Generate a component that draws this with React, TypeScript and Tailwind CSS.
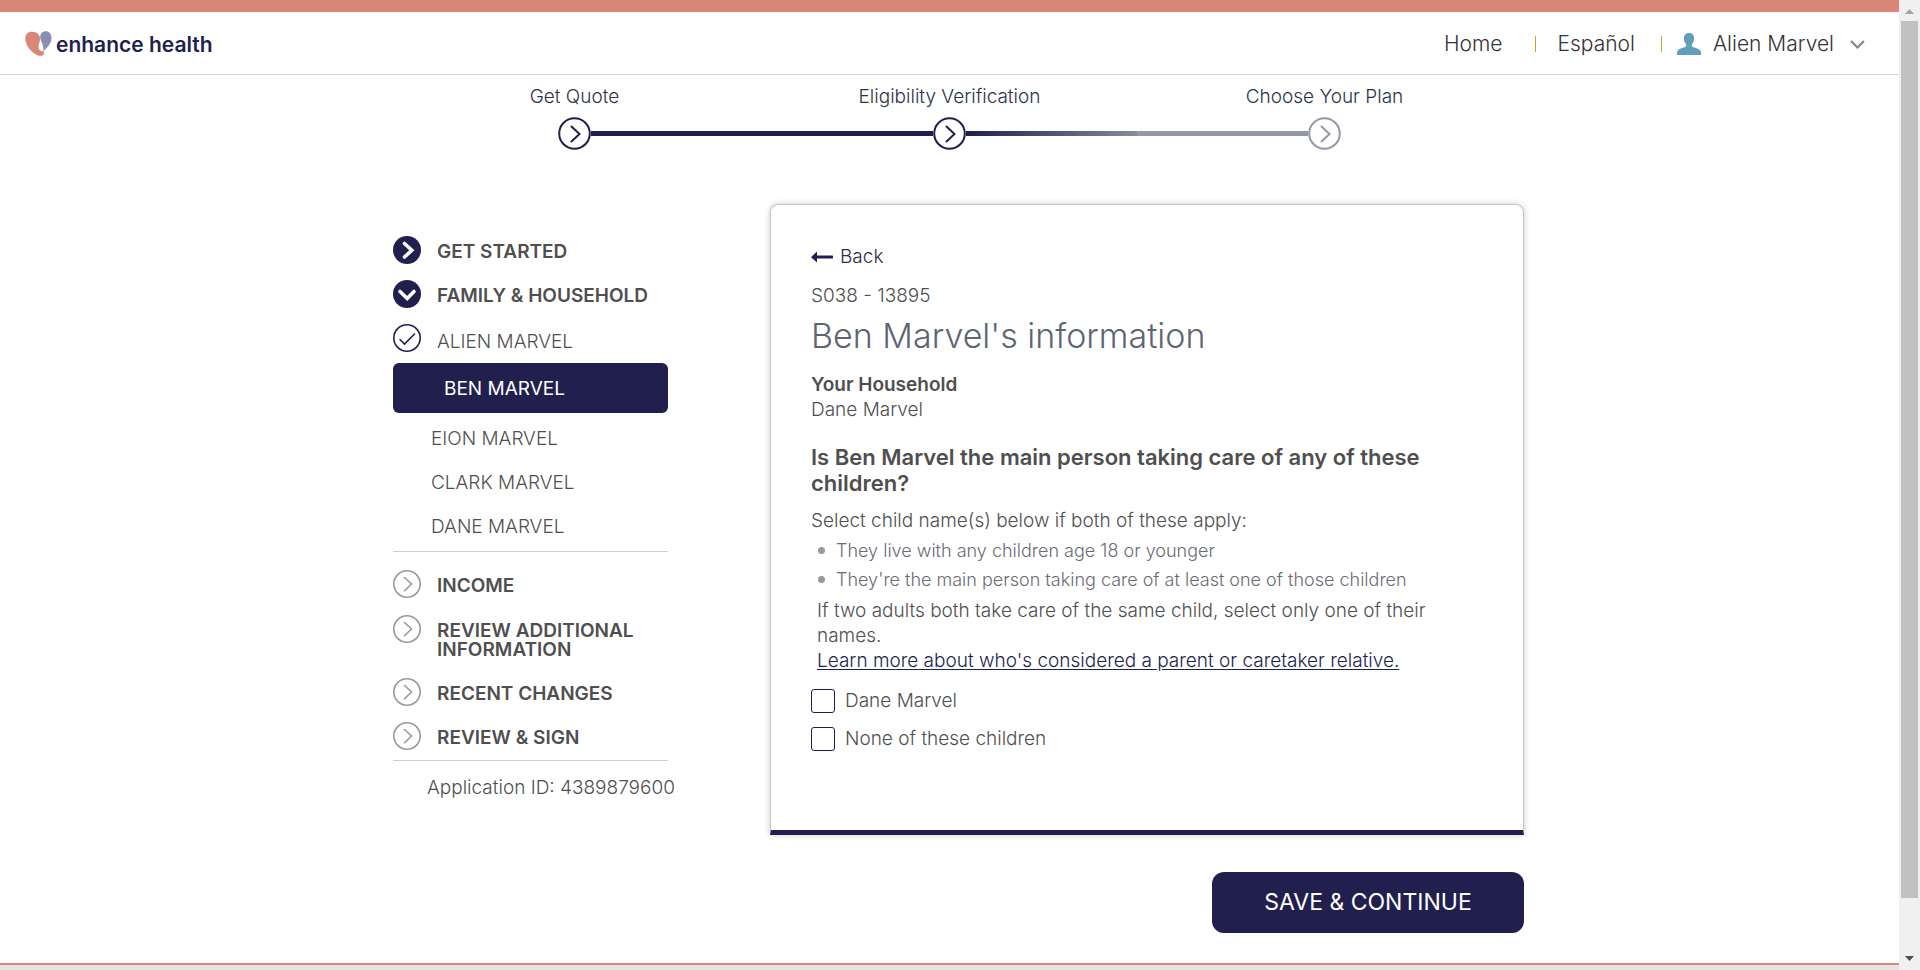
import React from "react";

const NAVY = "#211f4d";

function Logo() {
  return (
    <a href="#" aria-label="enhance health" className="flex items-start gap-1 pt-[2px]">
      <svg width="27" height="26" viewBox="0 0 27 26" aria-hidden="true">
        <path
          d="M7.500.8C3 .6.3 3.200.3 7.400c0 6.800 5.900 14 12.200 16.800 3 1.300 6.500.8 6.500-2.300 0-1.700-1.300-1.600-2.200-1.800-2.900-.5-3.600-3.300-3-6.600.5-2.500 1.700-4.300 1.200-6.800C14.200 3 11.400.9 7.500.8Z"
          fill="#da8777"
        />
        <path
          d="M20.500.3c-3.200.1-5.300 2.500-5.300 6.200 0 2.500 1.700 4.500 2.500 7.300.7 2.300.7 4 .6 6.300 3.600-3 8.200-8 8.200-12.900 0-4.300-2.400-7-6-6.900Z"
          fill="#8a8fb5"
        />
      </svg>
      <span className="pt-[2px] text-[21px] leading-6 font-semibold text-[#211f4d]">enhance health</span>
    </a>
  );
}

function PersonIcon() {
  return (
    <svg width="24" height="22" viewBox="0 0 24 22" fill="#609fb9" aria-hidden="true">
      <path d="M12 0c3.300 0 5.100 2 5.100 5.300 0 2.500-.8 4.300-1.800 5.500-.7 1-.6 2.700.5 3.200l5.200 1.700c2 .8 3 2.200 3 4.300v2H0v-2c0-2.100 1-3.500 3-4.300L8.200 14c1.100-.5 1.200-2.200.5-3.200-1-1.200-1.800-3-1.800-5.500C6.900 2 8.700 0 12 0Z" />
    </svg>
  );
}

function StepCircle({ color }: { color: string }) {
  return (
    <svg width="33" height="33" viewBox="0 0 33 33" fill="none" stroke={color} strokeWidth="2" aria-hidden="true">
      <circle cx="16.5" cy="16.5" r="15.300" fill="#fff" />
      <path d="M13.500 9.500 21.500 17l-8 7.500" strokeWidth="2" strokeLinecap="round" />
    </svg>
  );
}

type Kind = "right" | "down" | "check" | "idle";

function MenuIcon({ kind }: { kind: Kind }) {
  if (kind === "right" || kind === "down") {
    return (
      <svg width="28" height="28" viewBox="0 0 28 28" className="shrink-0" aria-hidden="true">
        <circle cx="14" cy="14" r="14" fill={NAVY} />
        <path
          d={kind === "right" ? "M11.500 7.500 18.800 14.300l-7.300 6.700" : "M7 11.500l7.200 7 6.800-7"}
          fill="none"
          stroke="#fff"
          strokeWidth="3.600"
          strokeLinecap="round"
        />
      </svg>
    );
  }
  const stroke = kind === "check" ? NAVY : "#999999";
  return (
    <svg width="28" height="28" viewBox="0 0 28 28" className="shrink-0" fill="none" stroke={stroke} strokeWidth="1.600" aria-hidden="true">
      <circle cx="14" cy="14" r="13.200" />
      <path d={kind === "check" ? "M7 15.500l4.500 4.500L21.500 10" : "M11.500 7.500 18.500 14l-7 6.800"} strokeLinecap="round" />
    </svg>
  );
}

function MenuItem({ kind, label, light }: { kind: Kind; label: string; light?: boolean }) {
  return (
    <a href="#" className="flex items-start gap-4 text-[19px] leading-[19px] text-[#4f4f4f]">
      <MenuIcon kind={kind} />
      <span className={light ? "pt-2" : "pt-[6px] font-semibold"}>{label}</span>
    </a>
  );
}

function Choice({ id, label }: { id: string; label: string }) {
  return (
    <div className="flex items-center gap-[10px]">
      <input id={id} type="checkbox" className="size-6 shrink-0 appearance-none rounded-[3px] border border-[#211f4d] bg-white checked:bg-[#211f4d]" />
      <label htmlFor={id} className="leading-6">{label}</label>
    </div>
  );
}

function Scrollbar() {
  return (
    <div aria-hidden="true" className="flex w-[21px] shrink-0 flex-col items-center bg-[#f0f0f0] py-[9px]">
      <svg width="9" height="5" viewBox="0 0 9 5" className="shrink-0" fill="#a3a3a3"><path d="M4.500 0 9 5H0Z" /></svg>
      <div className="w-full flex-1 px-[2px] py-[7px]">
        <div className="h-[94.5%] bg-[#c1c1c1]" />
      </div>
      <svg width="9" height="5" viewBox="0 0 9 5" className="shrink-0" fill="#505050"><path d="M0 0h9L4.500 5Z" /></svg>
    </div>
  );
}

export default function App() {
  return (
    <div className="flex h-screen bg-white font-['Inter','Liberation_Sans',sans-serif] font-light text-[#4f4f4f]">
      <div className="flex min-w-0 flex-1 flex-col overflow-hidden">
        <header className="flex shrink-0 items-center justify-between border-t-[12px] border-b border-t-[#da8777] border-b-[#d6d6d6] pr-[34px] pl-[25px] text-[#333333]">
          <Logo />
          <nav className="flex h-[62px] items-center pt-[2px] text-[21px] leading-6">
            <a href="#">Home</a>
            <span aria-hidden="true" className="ml-8 h-4 w-px bg-[#d9962f]" />
            <a href="#" className="ml-[22px]">Español</a>
            <span aria-hidden="true" className="ml-[26px] h-4 w-px bg-[#d9962f]" />
            <button type="button" className="ml-[15px] flex items-center">
              <PersonIcon />
              <span className="ml-3">Alien Marvel</span>
              <svg width="15" height="9" viewBox="0 0 15 9" fill="none" stroke="#858585" strokeWidth="2.200" className="ml-4" aria-hidden="true">
                <path d="M1 1l6.500 6.500L14 1" />
              </svg>
            </button>
          </nav>
        </header>

        <ol className="mx-auto grid w-full max-w-[1125px] shrink-0 grid-cols-3 pt-[10px] text-[19px] leading-6 text-[#2a3348]">
          <li className="flex flex-col items-center gap-2">
            <span>Get Quote</span>
            <span className="flex w-full items-center">
              <span className="flex-1" />
              <StepCircle color={NAVY} />
              <span className="h-[5px] flex-1 bg-[#211f4d]" />
            </span>
          </li>
          <li className="flex flex-col items-center gap-2">
            <span>Eligibility Verification</span>
            <span className="flex w-full items-center">
              <span className="h-[5px] flex-1 bg-[#211f4d]" />
              <StepCircle color={NAVY} />
              <span className="h-[5px] flex-1 bg-linear-to-r from-[#211f4d] to-[#858d98]" />
            </span>
          </li>
          <li className="flex flex-col items-center gap-2">
            <span>Choose Your Plan</span>
            <span className="flex w-full items-center">
              <span className="h-[5px] flex-1 bg-[#9298a5]" />
              <StepCircle color="#9298a5" />
              <span className="flex-1" />
            </span>
          </li>
        </ol>

        <main className="mx-auto flex w-full max-w-[1149px] flex-1 items-start justify-between pt-[54px] pl-[18px]">
          <aside className="w-[275px] shrink-0 pt-8">
            <nav className="flex flex-col">
              <div className="flex flex-col gap-4">
                <MenuItem kind="right" label="GET STARTED" />
                <MenuItem kind="down" label="FAMILY & HOUSEHOLD" />
                <MenuItem kind="check" label="ALIEN MARVEL" light />
              </div>
              <a href="#" aria-current="page" className="mt-[11px] flex h-[50px] items-center rounded-md bg-[#211f4d] pt-[2px] pl-[51px] text-[19px] font-normal text-white">BEN MARVEL</a>
              <div className="mt-1 border-b border-[#cfd1cf] pb-[2px] text-[19px]">
                <a href="#" className="flex h-11 items-center pl-[38px]">EION MARVEL</a>
                <a href="#" className="flex h-11 items-center pl-[38px]">CLARK MARVEL</a>
                <a href="#" className="flex h-11 items-center pl-[38px]">DANE MARVEL</a>
              </div>
              <div className="flex flex-col gap-[17px] border-b border-[#cfd1cf] pt-[18px] pb-[10px]">
                <MenuItem kind="idle" label="INCOME" />
                <MenuItem kind="idle" label="REVIEW ADDITIONAL INFORMATION" />
                <div className="flex flex-col gap-4 pt-[2px]">
                  <MenuItem kind="idle" label="RECENT CHANGES" />
                  <MenuItem kind="idle" label="REVIEW & SIGN" />
                </div>
              </div>
            </nav>
            <p className="mt-[15px] pl-[34px] text-[19px] leading-6 whitespace-nowrap">Application ID: 4389879600</p>
          </aside>

          <form className="flex w-[754px] flex-col items-end" onSubmit={(e) => e.preventDefault()}>
            <section className="w-full rounded-t-lg border border-b-[5px] border-[#c4c4c4] border-b-[#211f4d] px-10 pt-[39px] pb-[79px] text-[19px] leading-[25px] shadow-[0_0_6px_rgba(0,0,0,0.2)]">
              <button type="button" className="flex items-center gap-[7px] text-[#2a2d4a]">
                <svg width="22" height="12" viewBox="0 0 22 12" fill={NAVY} aria-hidden="true"><path d="M6 .5v4.100h15a1 1 0 0 1 0 3H6v3.900L0 6.200Z" /></svg>
                Back
              </button>
              <p className="mt-[14px]">S038 - 13895</p>
              <h1 className="mt-2 text-[34px] leading-10 text-[#5d6474]">Ben Marvel's information</h1>
              <h2 className="mt-4 font-semibold">Your Household</h2>
              <p>Dane Marvel</p>
              <h3 className="mt-[22px] text-[22px] leading-[26px] font-semibold">Is Ben Marvel the main person taking care of any of these children?</h3>
              <p className="mt-3">Select child name(s) below if both of these apply:</p>
              <ul className="mt-[3px] text-lg leading-[29px] text-[#6b6b74]">
                <li className="flex items-center gap-[11px] pl-[7px]"><span className="size-[7px] rounded-full bg-[#999999]" />They live with any children age 18 or younger</li>
                <li className="flex items-center gap-[11px] pl-[7px]"><span className="size-[7px] rounded-full bg-[#999999]" />They're the main person taking care of at least one of those children</li>
              </ul>
              <div className="mt-1 px-[6px]">
                <p>If two adults both take care of the same child, select only one of their names.</p>
                <a href="#" className="text-[#211f4d] underline underline-offset-2">Learn more about who's considered a parent or caretaker relative.</a>
              </div>
              <div className="mt-4 flex flex-col gap-[14px]">
                <Choice id="dane" label="Dane Marvel" />
                <Choice id="none" label="None of these children" />
              </div>
            </section>
            <button type="submit" className="mt-[37px] h-[61px] w-[312px] rounded-xl bg-[#211f4d] text-[23px] font-normal text-white">SAVE &amp; CONTINUE</button>
          </form>
        </main>

        <footer className="h-[7px] shrink-0 border-t-2 border-[#da8777] bg-[#e5e5e5]" />
      </div>
      <Scrollbar />
    </div>
  );
}
